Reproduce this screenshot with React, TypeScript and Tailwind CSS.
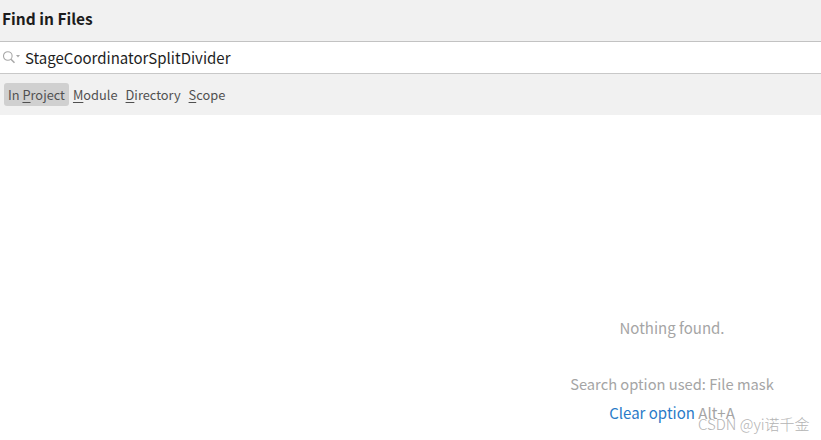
const font = { fontFamily: '"Noto Sans CJK SC", "Noto Sans", sans-serif' };

// faint diagonal watermark stamps, top-left of the first line
const stamps = [
  [137, 16], [182, 136], [225, 258], [270, 376],
  [544, 5], [588, 125], [633, 245], [678, 363],
  [-179, 270], [-134, 395], [-89, 510],
];

function Tab({ label, hot, rest, active }: { label?: string; hot: string; rest: string; active?: boolean }) {
  return (
    <span className={`h-[23px] flex items-center rounded-[3px] px-1 text-[12.8px] text-[#505050] ${active ? 'bg-[#d0d0d0]' : ''}`}>
      <span className="whitespace-pre">
        {label}<span className="underline underline-offset-2">{hot}</span>{rest}
      </span>
    </span>
  );
}

export default function App() {
  return (
    <div className="relative w-[821px] h-[440px] bg-white overflow-hidden" style={font}>
      <div className="h-[42px] bg-[#f1f1f1] border-b border-[#c2c2c2] flex items-center pl-[2px] pb-[3px] text-[15.5px] font-bold text-[#1c1c1c]">
        Find in Files
      </div>
      <div className="h-[32px] flex items-center border-b border-[#c8c8c8]">
        <svg width="18" height="14" viewBox="0 0 18 14" fill="none" className="ml-[3px] mr-[4px]">
          <circle cx="4.8" cy="5" r="4.3" stroke="#a8a8a8" strokeWidth="1.1" />
          <path d="M8 8.2L11.5 11.7" stroke="#a8a8a8" strokeWidth="1.5" />
          <path d="M13 4h4l-2 2.4z" fill="#a8a8a8" />
        </svg>
        <span className="text-[15px] text-[#1e1e1e] pt-[1px]">StageCoordinatorSplitDivider</span>
      </div>
      <div className="h-[41px] bg-[#f1f1f1] flex items-center pl-[4px]">
        <Tab label="In " hot="P" rest="roject" active />
        <Tab hot="M" rest="odule" />
        <Tab hot="D" rest="irectory" />
        <Tab hot="S" rest="cope" />
      </div>

      <div className="absolute left-[523px] top-[316px] w-[298px] flex flex-col items-center text-[15px] text-[#a5a5a5]">
        <span className="h-[24px] leading-[24px]">Nothing found.</span>
        <span className="mt-[32px] h-[24px] leading-[24px] text-[14.7px]">Search option used: File mask</span>
        <span className="mt-[5px] h-[24px] leading-[24px]">
          <span className="text-[#2a7bc8]">Clear option</span> Alt+A
        </span>
      </div>

      {/* csdn stamp */}
      <div className="absolute left-[698px] top-[414px] text-[15px] leading-[20px] font-light text-[#b4b4b4] whitespace-nowrap">
        CSDN @yi诺千金
      </div>

      {stamps.map(([x, y], i) => (
        <div
          key={i}
          className="absolute origin-top-left -rotate-[21deg] text-[19px] leading-[17px] text-[#000000]/[0.02] whitespace-nowrap pointer-events-none"
          style={{ left: x, top: y, fontFamily: '"Liberation Serif", "Noto Sans CJK SC", serif' }}
        >
          <div>y.余逸 3417</div>
          <div>y.yi.yu@dreamsmart.com-XJWH11004</div>
          <div>2024/08/14 17:13</div>
        </div>
      ))}
    </div>
  );
}
